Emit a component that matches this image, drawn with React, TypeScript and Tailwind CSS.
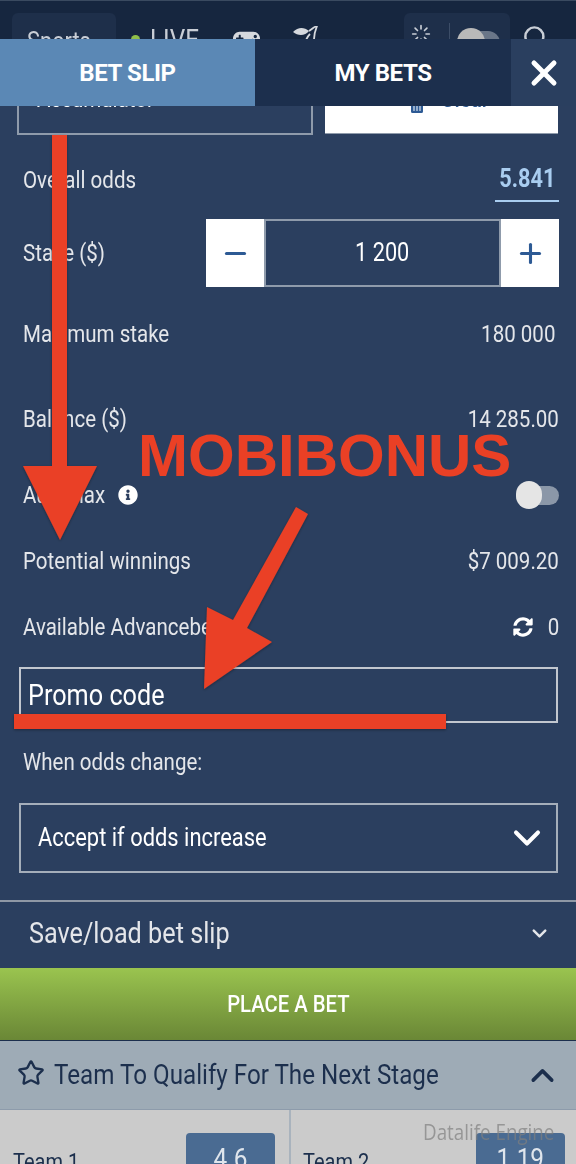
import React from 'react';
import { ChevronDown, ChevronUp, Loader, Minus, Plus, Search, Star, X } from 'lucide-react';
import { FaGamepad, FaInfoCircle, FaSyncAlt, FaTrashAlt } from 'react-icons/fa';

// the screenshot is squeezed sideways, so the text gets narrowed the same way
const Narrow = ({ children, right = false, center = false }: { children: React.ReactNode; right?: boolean; center?: boolean }) => (
  <span
    className={`inline-block whitespace-nowrap scale-x-[0.87] ${right ? 'origin-right' : center ? 'origin-center' : 'origin-left'}`}
  >
    {children}
  </span>
);

const Annotations = () => (
  <>
    <svg className="absolute left-0 top-0 pointer-events-none" width="576" height="1164" viewBox="0 0 576 1164">
      <defs>
        <filter id="arrowShadow" x="-10%" y="-10%" width="120%" height="120%">
          <feDropShadow dx="0" dy="1" stdDeviation="1.5" floodColor="#000" floodOpacity="0.35" />
        </filter>
      </defs>
      <g fill="#ea4025" filter="url(#arrowShadow)">
        <polygon points="52,135 67,135 67,466 97,466 60,540 23,466 52,466" />
        <polygon points="296,507 308,514 247,628 272,642 204,689 207,607 233,620" />
        <rect x="14" y="714" width="432" height="15" />
      </g>
    </svg>
    <div className="absolute left-[138px] top-[422px] font-['Liberation_Sans',sans-serif] font-bold text-[60px] leading-[68px] text-[#ea4025] whitespace-nowrap">
      MOBIBONUS
    </div>
    <div className="absolute left-[423px] top-[1120px] font-['Open_Sans',sans-serif] text-[21.6px] leading-[24px] text-[#7f7f7f]/70 whitespace-nowrap">
      <Narrow>Datalife Engine</Narrow>
    </div>
  </>
);

const CherryIcon = () => (
  <svg className="ml-[33px] mt-[25px] shrink-0" width="25" height="30" viewBox="0 0 25 30" fill="none">
    <path d="M0 6 C5 1 11 1 16 5 C12 10 5 10 0 6 Z" fill="#d5d8dd" />
    <path d="M16 5 C19 3 21 1 24 0 C22 5 21 9 21 14" stroke="#d5d8dd" strokeWidth="1.8" />
    <path d="M17 8 C15 10 14 12 13 14" stroke="#d5d8dd" strokeWidth="1.8" />
  </svg>
);

const TopNav = () => (
  <header className="h-[39px] overflow-hidden bg-[#16263f] border-t border-[#3a4a60] flex text-[#c9ced6] text-[25px] leading-[30px]">
    <div className="ml-[12px] mt-[12px] w-[104px] h-[60px] shrink-0 rounded-md bg-[#1e2f4a] pl-[15px] pt-[14px]">
      <Narrow>Sports</Narrow>
    </div>
    <div className="ml-[15px] mt-[24px] flex shrink-0">
      <span className="mt-[10px] w-[9px] h-[9px] rounded-full bg-[#8fbf4a]" />
      <span className="ml-[10px] w-[56px] text-[28px]">
        <Narrow>LIVE</Narrow>
      </span>
    </div>
    <FaGamepad className="ml-[27px] mt-[24px] shrink-0 text-[#d5d8dd]" size={27} />
    <CherryIcon />
    <div className="ml-[86px] mt-[12px] w-[106px] h-[60px] shrink-0 rounded-md bg-[#1e2f4a] flex">
      <Loader className="ml-[7px] mt-[11px] shrink-0" size={20} strokeWidth={2} />
      <span className="ml-[18px] mt-[10px] w-px h-[30px] bg-[#3c4d67]" />
      <div className="ml-[7px] mt-[18px] w-[43px] h-[24px] rounded-full bg-[#6a7688] relative">
        <span className="absolute left-0 top-[-3px] w-[28px] h-[30px] rounded-full bg-[#b9b9b9]" />
      </div>
    </div>
    <Search className="ml-[12px] mt-[23px] shrink-0" size={27} strokeWidth={2.2} />
  </header>
);

const Tabs = () => (
  <div className="h-[67px] flex bg-[#2a3f5f] text-white font-bold text-[24px] leading-[28px] tracking-[-0.4px]">
    <div className="w-[255px] bg-[#5b88b5] flex items-center justify-center">BET SLIP</div>
    <div className="w-[256px] bg-[#1c2f4d] flex items-center justify-center">MY BETS</div>
    <div className="flex-1 flex items-center justify-center">
      <X size={40} strokeWidth={3} />
    </div>
  </div>
);

const Row = ({ className, label, children }: { className: string; label: React.ReactNode; children?: React.ReactNode }) => (
  <div className={`flex items-center justify-between pl-[23px] pr-[17px] ${className}`}>
    <Narrow>{label}</Narrow>
    {children}
  </div>
);

const BetForm = () => (
  <section className="h-[794px] overflow-hidden text-[#e4e6ea] text-[23.6px] leading-[30px]">
    {/* select and clear, their top part sits behind the tabs */}
    <div className="h-[29px] overflow-hidden flex pl-[17px]">
      <div className="w-[296px] h-[29px] border-x-2 border-b-2 border-[#8f9bab] relative">
        <span className="absolute left-[18px] top-[-22px] text-white">
          <Narrow>Accumulator</Narrow>
        </span>
        <ChevronDown className="absolute left-[254px] top-[-11px] text-white" size={16} />
      </div>
      <div className="ml-[12px] w-[233px] h-[28px] bg-white border-b border-[#8f9bab] relative text-[#2d5a94]">
        <FaTrashAlt className="absolute left-[84px] top-[-9px]" size={16} />
        <span className="absolute left-[116px] top-[-22px] font-medium">
          <Narrow>Clear</Narrow>
        </span>
      </div>
    </div>

    <Row className="mt-[15px] h-[60px]" label="Overall odds">
      <div className="w-[64px] h-[44px] border-b-2 border-[#a9cdf0] text-[#a9cdf0] font-bold text-[25px] flex items-center justify-center">
        <Narrow center>5.841</Narrow>
      </div>
    </Row>

    <Row className="mt-[9px] h-[68px]" label="Stake ($)">
      <div className="flex h-[68px] text-[#2d5a94]">
        <div className="w-[58px] bg-white flex items-center justify-center">
          <Minus size={31} strokeWidth={2.4} />
        </div>
        <div className="w-[237px] border-2 border-[#8f9bab] bg-[#2b3f5f] flex items-center justify-center text-white text-[25px]">
          <Narrow center>1 200</Narrow>
        </div>
        <div className="w-[58px] bg-white flex items-center justify-center">
          <Plus size={31} strokeWidth={2.4} />
        </div>
      </div>
    </Row>

    <Row className="mt-[13px] h-[68px] !pr-[21px]" label="Maximum stake">
      <Narrow right>180 000</Narrow>
    </Row>
    <Row className="mt-[17px] h-[68px]" label="Balance ($)">
      <Narrow right>14 285.00</Narrow>
    </Row>

    <div className="mt-[8px] h-[68px] flex items-center pl-[23px] pr-[17px]">
      <span className="w-[95px]">
        <Narrow>Automax</Narrow>
      </span>
      <FaInfoCircle className="text-white w-[20px] h-[22px]" />
      <div className="ml-auto w-[43px] h-[19px] rounded-full bg-[#8b97a8] relative">
        <span className="absolute left-0 top-[-5px] w-[26px] h-[28px] rounded-full bg-[#e5e5e5]" />
      </div>
    </div>

    <Row className="mt-[4px] h-[56px]" label="Potential winnings">
      <Narrow right>$7 009.20</Narrow>
    </Row>

    <Row className="mt-[10px] h-[56px] !pr-[19px]" label="Available Advancebet">
      <div className="flex items-center">
        <FaSyncAlt className="text-white w-[20px] h-[20px]" />
        <span className="ml-[13px] w-[11px]">
          <Narrow right>0</Narrow>
        </span>
      </div>
    </Row>

    <div className="mt-[12px] ml-[19px] mr-[18px] h-[56px] border-2 border-[#c2c7cf] flex items-center pl-[7px] text-white text-[29px]">
      <Narrow>Promo code</Narrow>
    </div>

    <Row className="mt-[17px] h-[44px]" label="When odds change:" />

    <div className="mt-[19px] ml-[19px] mr-[18px] h-[70px] border-2 border-[#a5aeba] flex items-center justify-between pl-[17px] pr-[7px] text-white text-[25.2px]">
      <Narrow>Accept if odds increase</Narrow>
      <ChevronDown size={44} strokeWidth={2.2} />
    </div>
  </section>
);

export default function App() {
  return (
    <main className="relative w-[576px] h-[1164px] overflow-hidden bg-[#2b3f5f] font-['Roboto',sans-serif]">
      <TopNav />
      <Tabs />
      <BetForm />

      {/* Save / load */}
      <div className="h-[68px] pb-[4px] border-t-2 border-[#8f98a5] flex items-center justify-between pl-[29px] pr-[25px] text-[#e4e6ea] text-[29px] leading-[34px]">
        <Narrow>Save/load bet slip</Narrow>
        <ChevronDown size={23} strokeWidth={2.6} />
      </div>

      {/* Place a bet */}
      <div className="h-[73px] bg-gradient-to-b from-[#9ac44f] to-[#6a8736] border-b-[1.5px] border-[#1c2f4d] flex items-center justify-center text-white text-[23.3px] font-medium">
        <Narrow center>PLACE A BET</Narrow>
      </div>

      {/* Market */}
      <div className="h-[69px] bg-[#9eabb6] border-b border-[#8d9bab] flex items-center pl-[17px] pr-[15px] text-[#1c2f4d] text-[27.8px]">
        <Star className="mb-[5px]" size={28} strokeWidth={2} />
        <span className="ml-[9px]">
          <Narrow>Team To Qualify For The Next Stage</Narrow>
        </span>
        <ChevronUp className="ml-auto" size={37} strokeWidth={2.3} />
      </div>

      <div className="h-[60px] bg-[#cbcbcb] flex text-[#1c2f4d] text-[23px]">
        <div className="w-[291px] flex pl-[13px] pr-[14px] border-r-2 border-[#a9b3bd]">
          <span className="mt-[36px]">
            <Narrow>Team 1</Narrow>
          </span>
          <div className="ml-auto mt-[23px] w-[89px] h-[50px] rounded-t bg-[#4a6b92] text-[#dfe5ec] text-[28px] text-center pt-[5px]">
            <Narrow center>4.6</Narrow>
          </div>
        </div>
        <div className="flex-1 flex pl-[12px] pr-[11px]">
          <span className="mt-[36px]">
            <Narrow>Team 2</Narrow>
          </span>
          <div className="ml-auto mt-[23px] w-[89px] h-[50px] rounded-t bg-[#4a6b92] text-[#dfe5ec] text-[28px] text-center pt-[5px]">
            <Narrow center>1.19</Narrow>
          </div>
        </div>
      </div>

      <Annotations />
    </main>
  );
}
